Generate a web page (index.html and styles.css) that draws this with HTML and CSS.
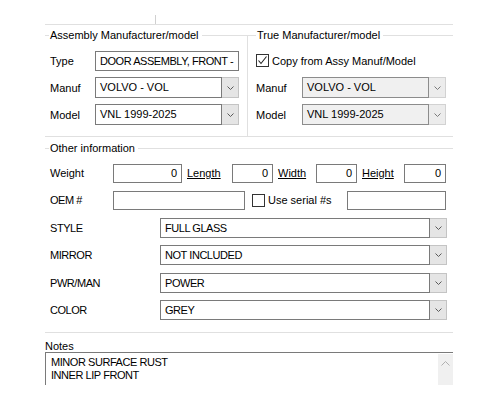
FILE: index.html
```html
<!DOCTYPE html>
<html>
<head>
<meta charset="utf-8">
<link rel="stylesheet" href="styles.css">
</head>
<body>
<div class="screen">
  <div class="tick"></div>
  <div class="panel">
    <div class="groups">
      <div class="group group-left">
        <div class="ghead"><span class="lead"></span><span class="legend">Assembly Manufacturer/model</span><span class="trail"></span></div>
        <div class="gbody">
          <div class="row">
            <span class="lbl w45">Type</span>
            <div class="tbox w144 caps">DOOR ASSEMBLY, FRONT -</div>
          </div>
          <div class="row">
            <span class="lbl w45">Manuf</span>
            <div class="sel w144"><div class="sel-text">VOLVO - VOL</div><div class="sel-btn"><svg width="7" height="4" viewBox="0 0 7 4"><polyline points="0.5,0.5 3.5,3.5 6.5,0.5" fill="none" stroke="#5a5a5a" stroke-width="1"/></svg></div></div>
          </div>
          <div class="row">
            <span class="lbl w45">Model</span>
            <div class="sel w144"><div class="sel-text">VNL 1999-2025</div><div class="sel-btn"><svg width="7" height="4" viewBox="0 0 7 4"><polyline points="0.5,0.5 3.5,3.5 6.5,0.5" fill="none" stroke="#5a5a5a" stroke-width="1"/></svg></div></div>
          </div>
        </div>
      </div>
      <div class="group group-right">
        <div class="ghead"><span class="lead lead-r"></span><span class="legend">True Manufacturer/model</span><span class="trail trail-r"></span></div>
        <div class="gbody gbody-r">
          <div class="row">
            <span class="chk"><svg width="11" height="11" viewBox="0 0 11 11"><polyline points="1.5,5.5 4,8.5 9.5,1.5" fill="none" stroke="#222" stroke-width="1.1"/></svg></span>
            <span class="chk-lbl">Copy from Assy Manuf/Model</span>
          </div>
          <div class="row">
            <span class="lbl w46">Manuf</span>
            <div class="sel w144 dis"><div class="sel-text">VOLVO - VOL</div><div class="sel-btn"><svg width="7" height="4" viewBox="0 0 7 4"><polyline points="0.5,0.5 3.5,3.5 6.5,0.5" fill="none" stroke="#7a7a7a" stroke-width="1"/></svg></div></div>
          </div>
          <div class="row">
            <span class="lbl w46">Model</span>
            <div class="sel w144 dis"><div class="sel-text">VNL 1999-2025</div><div class="sel-btn"><svg width="7" height="4" viewBox="0 0 7 4"><polyline points="0.5,0.5 3.5,3.5 6.5,0.5" fill="none" stroke="#7a7a7a" stroke-width="1"/></svg></div></div>
          </div>
        </div>
      </div>
    </div>

    <div class="other">
      <div class="ghead"><span class="lead"></span><span class="legend">Other information</span><span class="trail"></span></div>
      <div class="obody">
        <div class="row">
          <span class="lbl w63">Weight</span>
          <div class="tbox num w69">0</div>
          <span class="link wl45">Length</span>
          <div class="tbox num w41">0</div>
          <span class="link wl43">Width</span>
          <div class="tbox num w41">0</div>
          <span class="link wl47">Height</span>
          <div class="tbox num w42">0</div>
        </div>
        <div class="row">
          <span class="lbl w63 caps">OEM #</span>
          <div class="tbox w132"></div>
          <span class="chk chk-serial"></span>
          <span class="chk-lbl">Use serial #s</span>
          <div class="tbox w99 push"></div>
        </div>
        <div class="row extra">
          <span class="lbl w110 caps">STYLE</span>
          <div class="sel w287"><div class="sel-text caps">FULL GLASS</div><div class="sel-btn"><svg width="7" height="4" viewBox="0 0 7 4"><polyline points="0.5,0.5 3.5,3.5 6.5,0.5" fill="none" stroke="#5a5a5a" stroke-width="1"/></svg></div></div>
        </div>
        <div class="row">
          <span class="lbl w110 caps">MIRROR</span>
          <div class="sel w287"><div class="sel-text caps">NOT INCLUDED</div><div class="sel-btn"><svg width="7" height="4" viewBox="0 0 7 4"><polyline points="0.5,0.5 3.5,3.5 6.5,0.5" fill="none" stroke="#5a5a5a" stroke-width="1"/></svg></div></div>
        </div>
        <div class="row extra">
          <span class="lbl w110 caps">PWR/MAN</span>
          <div class="sel w287"><div class="sel-text caps">POWER</div><div class="sel-btn"><svg width="7" height="4" viewBox="0 0 7 4"><polyline points="0.5,0.5 3.5,3.5 6.5,0.5" fill="none" stroke="#5a5a5a" stroke-width="1"/></svg></div></div>
        </div>
        <div class="row">
          <span class="lbl w110 caps">COLOR</span>
          <div class="sel w287"><div class="sel-text caps">GREY</div><div class="sel-btn"><svg width="7" height="4" viewBox="0 0 7 4"><polyline points="0.5,0.5 3.5,3.5 6.5,0.5" fill="none" stroke="#5a5a5a" stroke-width="1"/></svg></div></div>
        </div>
      </div>
    </div>

    <div class="notes">
      <div class="notes-lbl">Notes</div>
      <div class="notes-box">
        <div class="notes-text caps">MINOR SURFACE RUST<br>INNER LIP FRONT</div>
        <div class="vscroll"><svg width="9" height="5" viewBox="0 0 9 5"><polyline points="0.5,4.5 4.5,0.5 8.5,4.5" fill="none" stroke="#b0b0b0" stroke-width="1"/></svg></div>
      </div>
    </div>
  </div>
</div>
</body>
</html>
```

FILE: styles.css
```css
html, body {
  margin: 0;
  padding: 0;
  background: #ffffff;
}
.screen {
  width: 500px;
  height: 400px;
  overflow: hidden;
  font-family: "Liberation Sans", Arial, sans-serif;
  font-size: 11px;
  color: #000;
}
.caps { letter-spacing: -0.45px; }
.tick {
  width: 1px;
  height: 9px;
  margin: 15px 0 0 155px;
  background: #d0d0d0;
}
.panel {
  margin-left: 45px;
  width: 408px;
  height: 360px;
  overflow: hidden;
  border-top: 1px solid #e0e0e0;
}
.groups {
  display: flex;
  border-bottom: 1px solid #e0e0e0;
}
.group {
  padding-top: 4px;
  display: flex;
  flex-direction: column;
}
.group-left { width: 203px; }
.group-right { width: 205px; }
.ghead {
  display: flex;
  height: 12px;
  line-height: 12px;
}
.lead {
  width: 4px;
  margin-top: 6px;
  border-top: 1px solid #e0e0e0;
}
.lead-r { width: 8px; }
.legend {
  padding: 0 1px;
  white-space: nowrap;
}
.trail {
  flex: 1;
  margin-top: 6px;
  margin-left: 2px;
  border-top: 1px solid #e0e0e0;
}
.group-left .trail { border-right: 1px solid #e0e0e0; }
.gbody {
  padding: 9px 0 11px 5px;
  display: flex;
  flex-direction: column;
  gap: 6px;
}
.group-left .gbody { border-right: 1px solid #e0e0e0; }
.gbody-r { padding-left: 8px; }
.row {
  display: flex;
  align-items: center;
  height: 21px;
}
.lbl { white-space: nowrap; }
.w45 { width: 45px; }
.w46 { width: 46px; }
.w63 { width: 63px; }
.w110 { width: 110px; }
.w144 { width: 144px; }
.w69 { width: 69px; }
.w41 { width: 41px; }
.w42 { width: 42px; }
.w132 { width: 132px; }
.w99 { width: 99px; }
.w287 { width: 287px; }
.tbox {
  box-sizing: border-box;
  height: 20px;
  border: 1px solid #7a7a7a;
  background: #fff;
  padding: 0 4px;
  line-height: 18px;
  white-space: nowrap;
  overflow: hidden;
}
.num { text-align: right; }
.link {
  text-decoration: underline;
  box-sizing: border-box;
  padding-left: 5px;
}
.wl45 { width: 50px; }
.wl43 { width: 43px; }
.wl47 { width: 47px; }
.push { margin-left: auto; margin-right: 7px; }
.sel {
  display: flex;
  height: 21px;
}
.sel-text {
  flex: 1;
  box-sizing: border-box;
  border: 1px solid #7a7a7a;
  background: #fff;
  padding: 0 4px;
  line-height: 19px;
  white-space: nowrap;
  overflow: hidden;
}
.sel-btn {
  width: 17px;
  box-sizing: border-box;
  border: 1px solid #c4c4c4;
  border-left: none;
  background: #e5e5e5;
  display: flex;
  align-items: center;
  justify-content: center;
}
.dis .sel-text {
  background: #f0f0f0;
  border-color: #8c8c8c;
}
.dis .sel-btn {
  background: #ececec;
  border-color: #d2d2d2;
}
.chk {
  box-sizing: border-box;
  width: 13px;
  height: 13px;
  border: 1px solid #333;
  background: #fff;
  display: flex;
  align-items: center;
  justify-content: center;
}
.chk-lbl {
  margin-left: 3px;
  white-space: nowrap;
}
.chk-serial { margin-left: 7px; }
.other {
  padding-top: 5px;
  border-bottom: 1px solid #e0e0e0;
}
.obody {
  padding: 9px 0 12px 5px;
  display: flex;
  flex-direction: column;
  gap: 7px;
}
.obody .row { height: 20px; }
.obody .row.extra { margin-top: 1px; }
.obody .tbox { height: 19px; line-height: 17px; }
.obody .sel { height: 20px; }
.obody .sel-text { line-height: 18px; }
.notes {
  padding-top: 7px;
}
.notes-lbl {
  line-height: 12px;
  height: 12px;
}
.notes-box {
  height: 40px;
  border-top: 1px solid #7a7a7a;
  border-left: 1px solid #7a7a7a;
  display: flex;
}
.notes-text {
  flex: 1;
  padding: 3px 0 0 5px;
  line-height: 13px;
}
.vscroll {
  width: 15px;
  height: 32px;
  margin-top: 1px;
  background: #f0f0f0;
  display: flex;
  justify-content: center;
  padding-top: 7px;
  box-sizing: border-box;
}
```
